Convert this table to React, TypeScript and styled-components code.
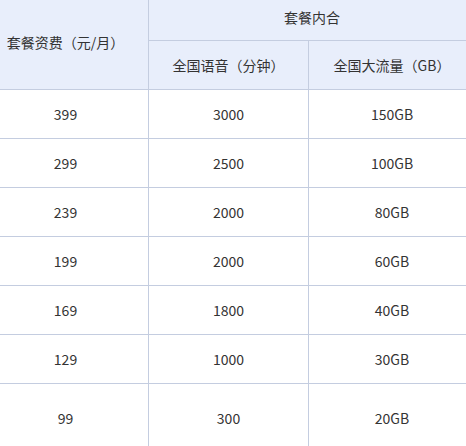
import React from 'react';
import styled, { createGlobalStyle } from 'styled-components';

const GlobalStyle = createGlobalStyle`
  html, body {
    margin: 0;
    padding: 0;
    background: #ffffff;
    overflow: hidden;
  }
`;

const Viewport = styled.div`
  width: 466px;
  height: 446px;
  overflow: hidden;
`;

const Table = styled.div`
  display: grid;
  grid-template-columns: 165px 159px 166px;
  grid-template-rows: 46px 48px repeat(6, 48px) 68px;
  gap: 1px;
  margin: -6px 0 0 -17px;
  background: #c4cde0;
  width: 492px;
  color: #333333;
  font-family: 'Microsoft YaHei', 'Noto Sans CJK SC', 'Noto Sans', sans-serif;
  font-size: 14px;
`;

const Cell = styled.div<{ $head?: boolean; $rowSpan?: number; $colSpan?: number }>`
  display: flex;
  align-items: center;
  justify-content: center;
  background: ${(p) => (p.$head ? '#e8eefb' : '#ffffff')};
  grid-row: ${(p) => (p.$rowSpan ? `span ${p.$rowSpan}` : 'auto')};
  grid-column: ${(p) => (p.$colSpan ? `span ${p.$colSpan}` : 'auto')};
  white-space: nowrap;
`;

const plans = [
  ['399', '3000', '150GB'],
  ['299', '2500', '100GB'],
  ['239', '2000', '80GB'],
  ['199', '2000', '60GB'],
  ['169', '1800', '40GB'],
  ['129', '1000', '30GB'],
  ['99', '300', '20GB'],
];

export default function App() {
  return (
    <Viewport>
      <GlobalStyle />
      <Table>
        <Cell $head $rowSpan={2}>套餐资费（元/月）</Cell>
        <Cell $head $colSpan={2}>套餐内合</Cell>
        <Cell $head>全国语音（分钟）</Cell>
        <Cell $head>全国大流量（GB）</Cell>
        {plans.map((row) =>
          row.map((value, i) => <Cell key={`${row[0]}-${i}`}>{value}</Cell>)
        )}
      </Table>
    </Viewport>
  );
}
